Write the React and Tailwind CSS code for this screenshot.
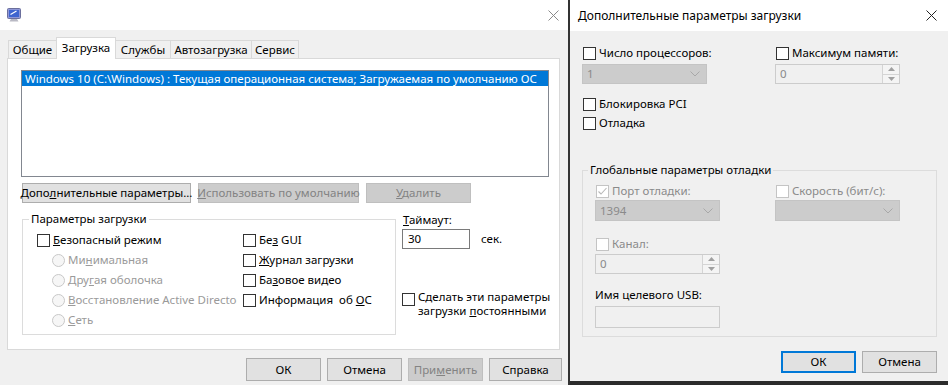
import React from "react";

function Check({ checked = false, disabled = false }) {
  return (
    <span
      className={
        disabled
          ? "flex h-[13px] w-[13px] shrink-0 items-center justify-center border border-[#c4c4c4] bg-white"
          : "flex h-[13px] w-[13px] shrink-0 items-center justify-center border border-[#333333] bg-white"
      }
    >
      {checked && (
        <svg width="11" height="11" viewBox="0 0 11 11">
          <path d="M1.5 5.5 L4 8 L9.5 2" fill="none" stroke="#b8b8b8" strokeWidth="1.1" />
        </svg>
      )}
    </span>
  );
}

function Radio() {
  return <span className="h-[13px] w-[13px] shrink-0 rounded-full border border-[#c8c8c8] bg-[#f6f6f6]" />;
}

function Chevron() {
  return (
    <svg width="10" height="6" viewBox="0 0 10 6">
      <path d="M0.5 0.5 L5 5 L9.5 0.5" fill="none" stroke="#a8a8a8" strokeWidth="1" />
    </svg>
  );
}

function Spin({ value }) {
  return (
    <div className="flex h-[20px] w-[125px] border border-[#cccccc] bg-[#f0f0f0]">
      <span className="flex-1 pl-[4px] leading-[18px] text-[#8a8a8a]">{value}</span>
      <div className="flex w-[17px] flex-col border-l border-[#d4d4d4] bg-[#f4f4f4]">
        <span className="flex flex-1 items-center justify-center border-b border-[#d4d4d4]">
          <svg width="7" height="4" viewBox="0 0 7 4">
            <path d="M0 4 L3.5 0 L7 4Z" fill="#a0a0a0" />
          </svg>
        </span>
        <span className="flex flex-1 items-center justify-center">
          <svg width="7" height="4" viewBox="0 0 7 4">
            <path d="M0 0 L3.5 4 L7 0Z" fill="#a0a0a0" />
          </svg>
        </span>
      </div>
    </div>
  );
}

function CloseX({ color }) {
  return (
    <svg width="11" height="11" viewBox="0 0 11 11">
      <path d="M0.5 0.5 L10.5 10.5 M10.5 0.5 L0.5 10.5" stroke={color} strokeWidth="1" fill="none" />
    </svg>
  );
}

function MsconfigIcon() {
  return (
    <svg width="16" height="16" viewBox="0 0 16 16">
      <rect x="1.5" y="1.5" width="13" height="10" rx="1" fill="#8f97d8" stroke="#6b6f9c" strokeWidth="1" />
      <rect x="3" y="3" width="10" height="7" fill="#3f64cf" />
      <path d="M4.5 7.5 L10.5 4" stroke="#ffffff" strokeWidth="1.2" fill="none" />
      <path d="M5 12 H11 L12.5 14.5 H3.5 Z" fill="#b9b9c4" />
    </svg>
  );
}

export default function App() {
  return (
    <div className="flex h-[385px] w-[948px] overflow-hidden bg-white font-['Noto_Sans',sans-serif] text-[11.5px] leading-[16px] text-black">
      {/* Left dialog: msconfig */}
      <div className="flex w-[568px] shrink-0 flex-col bg-[#f0f0f0]">
        <div className="flex h-[30px] shrink-0 items-center bg-white pl-[6px] pr-[9px]">
          <MsconfigIcon />
          <div className="flex-1" />
          <CloseX color="#8a8a8a" />
        </div>
        <div className="flex flex-col pl-[7px] pt-[7px]">
          {/* tabs */}
          <div className="flex h-[21px] items-end pl-[1px]">
            <div className="flex h-[18px] w-[48px] items-center justify-center border-l border-t border-[#d9d9d9]">Общие</div>
            <div className="relative z-10 -mb-px flex h-[22px] w-[60px] items-start justify-center border-x border-t border-[#d9d9d9] bg-white pt-[2px]">Загрузка</div>
            <div className="flex h-[18px] w-[54px] items-center justify-center border-t border-[#d9d9d9]">Службы</div>
            <div className="flex h-[18px] w-[81px] items-center justify-center border-l border-t border-[#d9d9d9]">Автозагрузка</div>
            <div className="flex h-[18px] w-[48px] items-center justify-center border-x border-t border-[#d9d9d9]">Сервис</div>
          </div>
          {/* panel */}
          <div className="flex h-[292px] w-[553px] flex-col border border-[#d9d9d9] bg-white">
            <div className="ml-[13px] mt-[11px] h-[107px] w-[528px] border border-[#828790] bg-white">
              <div className="h-[15px] whitespace-nowrap bg-[#0078d7] pl-[3px] leading-[15px] text-white">
                Windows 10 (C:\Windows) : Текущая операционная система; Загружаемая по умолчанию ОС
              </div>
            </div>
            <div className="ml-[14px] mt-[6px] flex h-[20px] gap-[7px]">
              <div className="flex w-[169px] items-center justify-center whitespace-nowrap border border-[#adadad] bg-[#e1e1e1]">
                <span>Допо<u>л</u>нительные параметры...</span>
              </div>
              <div className="flex w-[161px] items-center justify-center whitespace-nowrap border border-[#bfbfbf] bg-[#cccccc] text-[#838383]">
                <span><u>И</u>спользовать по умолчанию</span>
              </div>
              <div className="flex w-[105px] items-center justify-center border border-[#bfbfbf] bg-[#cccccc] text-[#838383]">
                <span><u>У</u>далить</span>
              </div>
            </div>
            <div className="ml-[14px] mt-[9px] flex">
              {/* group box */}
              <div className="relative mt-[7px] h-[116px] w-[374px] border border-[#dcdcdc]">
                <span className="absolute left-[6px] top-[-9px] bg-white px-[2px]">Параметры загрузки</span>
                <div className="flex pl-[14px] pt-[10px]">
                  <div className="flex w-[200px] flex-col overflow-hidden whitespace-nowrap">
                    <div className="flex h-[20px] items-center gap-[3px]">
                      <Check />
                      <span><u>Б</u>езопасный режим</span>
                    </div>
                    <div className="flex flex-col pl-[15px] text-[#9a9a9a]">
                      <div className="flex h-[20px] items-center gap-[3px]">
                        <Radio />
                        <span>Ми<u>н</u>имальная</span>
                      </div>
                      <div className="flex h-[20px] items-center gap-[3px]">
                        <Radio />
                        <span>Дру<u>г</u>ая оболочка</span>
                      </div>
                      <div className="flex h-[20px] items-center gap-[3px]">
                        <Radio />
                        <span><u>В</u>осстановление Active Director</span>
                      </div>
                      <div className="flex h-[20px] items-center gap-[3px]">
                        <Radio />
                        <span><u>С</u>еть</span>
                      </div>
                    </div>
                  </div>
                  <div className="ml-[6px] flex flex-col whitespace-nowrap">
                    <div className="flex h-[20px] items-center gap-[3px]">
                      <Check />
                      <span>Бе<u>з</u> GUI</span>
                    </div>
                    <div className="flex h-[20px] items-center gap-[3px]">
                      <Check />
                      <span><u>Ж</u>урнал загрузки</span>
                    </div>
                    <div className="flex h-[20px] items-center gap-[3px]">
                      <Check />
                      <span>Ба<u>з</u>овое видео</span>
                    </div>
                    <div className="flex h-[20px] items-center gap-[3px]">
                      <Check />
                      <span>Информация&nbsp; об <u>О</u>С</span>
                    </div>
                  </div>
                </div>
              </div>
              {/* timeout */}
              <div className="ml-[6px] flex flex-col">
                <span className="pl-[1px]"><u>Т</u>аймаут:</span>
                <div className="mt-[1px] flex items-center">
                  <div className="h-[20px] w-[68px] border border-[#7a7a7a] pl-[5px] leading-[18px]">30</div>
                  <span className="ml-[11px]">сек.</span>
                </div>
                <div className="mt-[41px] flex items-start gap-[3px]">
                  <span className="mt-[3px]"><Check /></span>
                  <div className="flex flex-col whitespace-nowrap leading-[14px]">
                    <span>Сделать эти параметры</span>
                    <span>загрузки <u>п</u>остоянными</span>
                  </div>
                </div>
              </div>
            </div>
          </div>
          {/* bottom buttons */}
          <div className="mt-[8px] flex h-[23px] gap-[6px] pl-[239px]">
            <div className="flex w-[75px] items-center justify-center border border-[#adadad] bg-[#e1e1e1]">ОК</div>
            <div className="flex w-[75px] items-center justify-center border border-[#adadad] bg-[#e1e1e1]">Отмена</div>
            <div className="flex w-[75px] items-center justify-center border border-[#bfbfbf] bg-[#cccccc] text-[#838383]">
              <span>При<u>м</u>енить</span>
            </div>
            <div className="flex w-[73px] items-center justify-center border border-[#adadad] bg-[#e1e1e1]">Справка</div>
          </div>
        </div>
      </div>

      {/* Right dialog: advanced boot options */}
      <div className="flex w-[380px] shrink-0 flex-col border-l-2 border-[#333333]">
        <div className="flex h-[31px] shrink-0 items-center bg-white pl-[8px] pr-[11px]">
          <span className="flex-1 text-[12px]">Дополнительные параметры загрузки</span>
          <CloseX color="#222222" />
        </div>
        <div className="flex flex-1 flex-col border-b-4 border-[#2b2b2b] bg-[#f0f0f0] pl-[12px]">
          <div className="mt-[14px] flex">
            <div className="flex w-[193px] flex-col">
              <div className="flex h-[16px] items-center gap-[3px] pl-[1px]">
                <Check />
                <span>Число процессоров:</span>
              </div>
              <div className="mt-[3px] flex h-[20px] w-[125px] items-center justify-between border border-[#c4c4c4] bg-[#cccccc] pl-[4px] pr-[6px] text-[#8a8a8a]">
                <span>1</span>
                <Chevron />
              </div>
            </div>
            <div className="flex flex-col">
              <div className="flex h-[16px] items-center gap-[3px] pl-[1px]">
                <Check />
                <span>Максимум памяти:</span>
              </div>
              <div className="mt-[3px]">
                <Spin value="0" />
              </div>
            </div>
          </div>
          <div className="mt-[12px] flex h-[16px] items-center gap-[3px] pl-[1px]">
            <Check />
            <span>Блокировка PCI</span>
          </div>
          <div className="mt-[3px] flex h-[16px] items-center gap-[3px] pl-[1px]">
            <Check />
            <span>Отладка</span>
          </div>
          {/* group */}
          <div className="relative mt-[39px] h-[167px] w-[355px] border border-[#dcdcdc]">
            <span className="absolute left-[5px] top-[-9px] bg-[#f0f0f0] px-[2px]">Глобальные параметры отладки</span>
            <div className="flex pl-[12px] pt-[12px]">
              <div className="flex w-[180px] flex-col">
                <div className="flex h-[16px] items-center gap-[3px] pl-[1px] text-[#8a8a8a]">
                  <Check checked disabled />
                  <span>Порт отладки:</span>
                </div>
                <div className="mt-[1px] flex h-[21px] w-[125px] items-center justify-between border border-[#c4c4c4] bg-[#cccccc] pl-[4px] pr-[6px] text-[#8a8a8a]">
                  <span>1394</span>
                  <Chevron />
                </div>
                <div className="mt-[15px] flex h-[16px] items-center gap-[3px] pl-[1px] text-[#8a8a8a]">
                  <Check disabled />
                  <span>Канал:</span>
                </div>
                <div className="mt-[2px]">
                  <Spin value="0" />
                </div>
                <div className="mt-[13px] h-[16px]">Имя целевого USB:</div>
                <div className="mt-[3px] h-[22px] w-[125px] border border-[#cccccc] bg-[#f0f0f0]" />
              </div>
              <div className="flex flex-col">
                <div className="flex h-[16px] items-center gap-[3px] pl-[1px] text-[#8a8a8a]">
                  <Check disabled />
                  <span>Скорость (бит/с):</span>
                </div>
                <div className="mt-[1px] flex h-[21px] w-[125px] items-center justify-end border border-[#c4c4c4] bg-[#cccccc] pr-[6px]">
                  <Chevron />
                </div>
              </div>
            </div>
          </div>
          <div className="mt-[14px] flex h-[22px] justify-end gap-[6px] pr-[11px]">
            <div className="flex w-[75px] items-center justify-center border-2 border-[#0078d7] bg-[#e1e1e1]">ОК</div>
            <div className="flex w-[75px] items-center justify-center border border-[#adadad] bg-[#e1e1e1]">Отмена</div>
          </div>
        </div>
      </div>
    </div>
  );
}
